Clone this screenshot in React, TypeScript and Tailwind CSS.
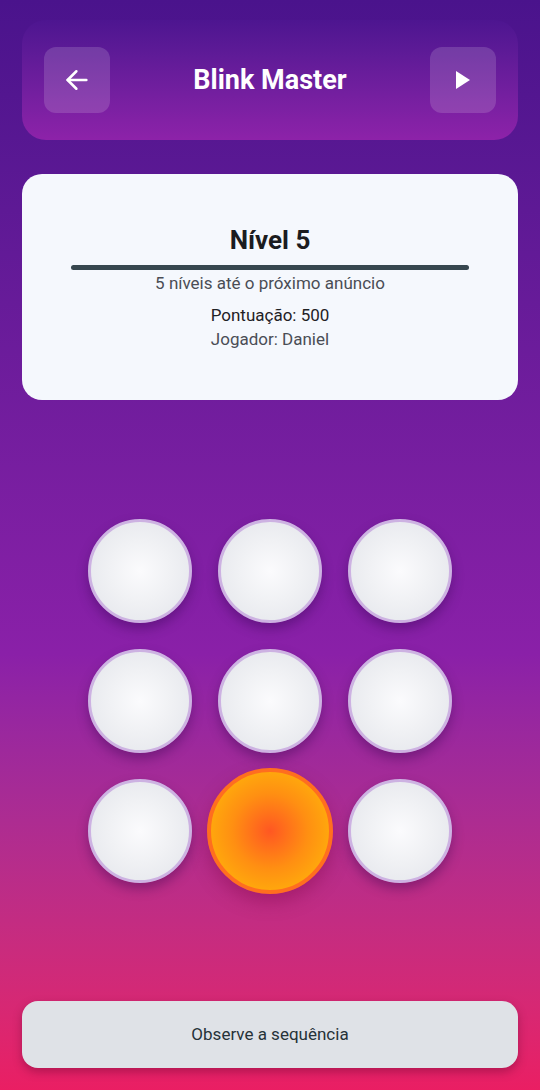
import React from "react";

const cells = [0, 1, 2, 3, 4, 5, 6, 7, 8];
const activeCell = 7;

const App: React.FC = () => {
  return (
    <div
      className="h-[1090px] w-[540px] flex flex-col px-[22px] bg-gradient-to-b from-[#4a138c] via-[#8a20a8] via-60% to-[#ea1e63] text-white"
      style={{ fontFamily: "Roboto, 'Noto Sans', sans-serif" }}
    >
      {/* Header */}
      <div className="mt-5 h-[120px] shrink-0 rounded-3xl bg-gradient-to-b from-[#4d1590] to-[#8d22a9] flex items-center justify-between px-[22px]">
        <button className="w-[66px] h-[66px] rounded-xl bg-white/15 flex items-center justify-center">
          <svg width="30" height="30" viewBox="0 0 24 24" fill="none" stroke="white" strokeWidth="2" strokeLinecap="round" strokeLinejoin="round">
            <path d="M19.5 12H4.5" />
            <path d="M11.5 19l-7-7 7-7" />
          </svg>
        </button>
        <h1 className="text-[27px] font-bold">Blink Master</h1>
        <button className="w-[66px] h-[66px] rounded-xl bg-white/15 flex items-center justify-center">
          <svg width="18" height="20" viewBox="0 0 18 20">
            <path d="M2 1L16 10L2 19Z" fill="white" />
          </svg>
        </button>
      </div>

      {/* Info card */}
      <div className="mt-[34px] h-[226px] shrink-0 rounded-[20px] bg-[#f5f8fd] flex flex-col items-center justify-center pt-0">
        <h2 className="text-[26px] font-bold text-[#1b1c1f] leading-8">Nível 5</h2>
        <div className="mt-[9px] w-[398px] h-[5px] rounded-full bg-[#37474f]" />
        <p className="mt-[1px] text-[17px] text-[#4a4d55] leading-6">5 níveis até o próximo anúncio</p>
        <p className="mt-2 text-[17px] text-[#1f2125] leading-6">Pontuação: 500</p>
        <p className="text-[17px] text-[#4a4d55] leading-6">Jogador: Daniel</p>
      </div>

      {/* Light grid */}
      <div className="flex-1 flex items-center justify-center">
        <div className="grid grid-cols-3">
          {cells.map((i) => (
            <div key={i} className="w-[130px] h-[130px] flex items-center justify-center">
              {i === activeCell ? (
                <div className="w-[126px] h-[126px] shrink-0 rounded-full border-4 border-[#ff6e1f] bg-[radial-gradient(circle,#ff5722_0%,#ff8f12_45%,#ffc107_100%)] shadow-[0_8px_18px_rgba(120,0,60,0.35)]" />
              ) : (
                <div className="w-[104px] h-[104px] rounded-full border-[3px] border-[#cdb2e2] bg-[radial-gradient(circle,#fbfbfd_0%,#f0f1f4_45%,#e2e4ea_100%)] shadow-[0_6px_12px_rgba(40,0,70,0.35)]" />
              )}
            </div>
          ))}
        </div>
      </div>

      {/* Status button */}
      <button className="mb-[22px] h-[67px] shrink-0 rounded-2xl bg-[#dfe2e7] text-[17px] text-[#263238] shadow-[0_4px_10px_rgba(80,0,40,0.35)]">
        Observe a sequência
      </button>
    </div>
  );
};

export default App;
